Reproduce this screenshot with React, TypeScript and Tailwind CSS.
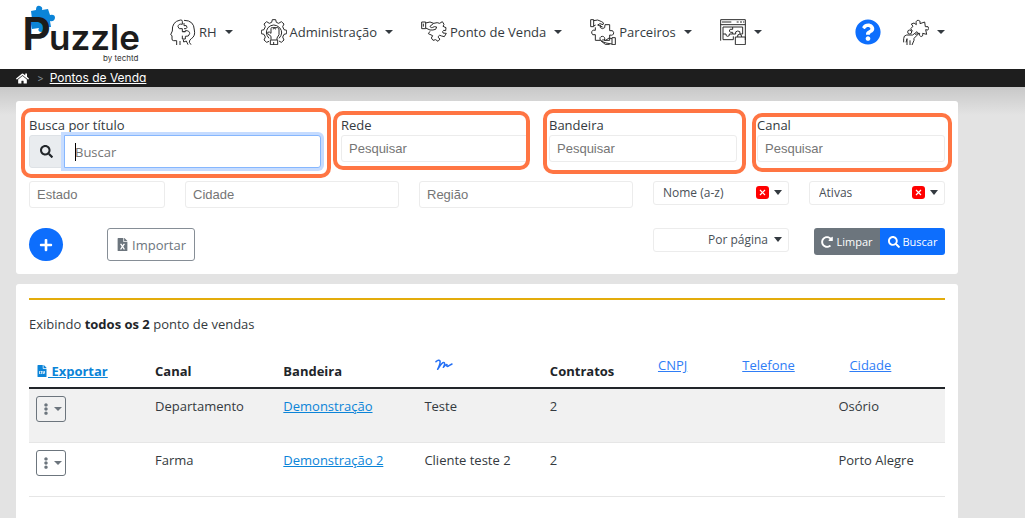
import React from "react";
import {
  FaEllipsisV,
  FaFileCsv,
  FaFileExcel,
  FaHome,
  FaPlus,
  FaQuestionCircle,
  FaRedoAlt,
  FaSearch,
} from "react-icons/fa";

type IconProps = { children: React.ReactNode };

const LineIcon: React.FC<IconProps> = ({ children }) => (
  <svg
    viewBox="0 0 78 78"
    className="h-[26px] w-[26px] shrink-0"
    fill="none"
    stroke="#2b2b2b"
    strokeWidth="3"
    strokeLinejoin="round"
    aria-hidden="true"
  >
    {children}
  </svg>
);

const HeadsIcon = () => (
  <LineIcon>
    <path d="M20 78V65H11Q6 65 6 60V50L2 47L7 36Q5 8 31 3Q37 2 37 7V16Q25 13 24 23Q25 32 37 29V38H46" />
    <path d="M42 4Q72 4 73 33Q77 51 64 59Q58 62 58 70L63 77M54 77L49 66L41 69L40 62" />
    <path d="M42 12V20Q51 17 51 25Q50 31 42 29M37 38H46V35Q59 34 59 44Q57 54 46 52V60H37V50M30 78V66" />
  </LineIcon>
);

const GearIcon = () => (
  <LineIcon>
    <path d="M24 67L17 70L9 63L13 54L9 46L1 44V34L9 32L13 23L9 15L17 8L25 13L32 10L34 2H44L46 10L53 13L61 8L69 15L65 23L69 32L77 34V44L69 46L65 54L69 63L61 70L54 66" />
    <path d="M24 58Q10 42 21 26Q38 10 56 26Q69 42 54 58" />
    <path d="M30 62V52L20 44Q18 38 25 39L30 43V29Q31 24 35 26H50Q55 27 54 33V47L48 57V63M28 63H50V77H28ZM38 69V77M37 31Q38 22 45 31" />
  </LineIcon>
);

const HandshakeIcon = () => (
  <LineIcon>
    <path d="M2 9H14V29H2ZM14 12L27 9L38 13Q50 9 56 13L64 8L69 16L66 22L75 26L74 35L68 34Q63 37 66 42L76 43L70 53L62 51Q55 46 52 52Q50 57 57 60L51 67L44 62L36 64L31 57L35 50L22 44L27 37" />
    <path d="M38 13L27 22Q29 29 40 23L47 24L44 31Q36 34 27 33L14 27M7 14V23" />
  </LineIcon>
);

const PartnersIcon = () => (
  <LineIcon>
    <path d="M2 2H11V23H2ZM11 5L23 3L35 8Q44 11 39 17L30 14L23 18L38 24M11 21L17 18" />
    <path d="M16 25V34Q5 31 5 42Q6 50 16 47V64H31Q27 53 37 52Q47 53 43 64H59V48Q71 51 71 41Q70 32 59 35V17H45Q47 29 37 29Q28 28 31 18" />
    <path d="M66 56H76V77H66ZM66 59L57 57L47 64Q34 60 35 67L48 72L66 75M31 64L47 77H59" />
  </LineIcon>
);

const WindowIcon = () => (
  <LineIcon>
    <path d="M2 65V2H76V63M2 17H76M6 9H34M50 9H56M60 9H66M69 9H73" />
    <path d="M9 24H68V45H60Q62 35 53 36Q44 37 47 45H38M9 24V62H40V52M38 24V31Q28 28 28 36Q30 42 38 40V45H28Q30 52 22 52Q17 51 18 45H9M46 54H76V77H46ZM53 54Q51 45 59 46Q66 47 65 54" />
  </LineIcon>
);

const ProfileIcon = () => (
  <LineIcon>
    <path d="M29 37L23 29L30 22L25 15L33 12L40 17Q37 3 46 4Q54 5 51 14L65 9L67 23Q78 20 77 29Q76 36 68 32L71 46L59 43Q61 54 53 52Q46 49 50 43L36 46" />
    <circle cx="20" cy="39" r="6" />
    <path d="M2 70V59Q2 49 11 48H29L42 38L47 44L33 58V64L27 78M12 78V59L9 70M21 78V64" />
  </LineIcon>
);

const Logo = () => (
  <svg viewBox="0 0 120 60" className="h-[60px] w-[120px] shrink-0" role="img" aria-label="Puzzle by techtd">
    <g transform="translate(-22 -4)">
      <path
        d="M31 10L36 9Q36 4 40 5Q43 6 42 9L48 8L50 14Q55 13 55 17Q54 21 50 20L51 26L45 26Q45 31 41 31Q37 30 39 27L32 28L31 23Q27 23 28 18Q30 17 32 18Z"
        fill="#0b84d8"
      />
      <text x="22" y="49" fontFamily="Inter, sans-serif" fontWeight="600" fontSize="45" fill="#1c1c1c">P</text>
      <text x="49" y="49" fontFamily="Inter, sans-serif" fontWeight="600" fontSize="35" fill="#1c1c1c">uzzle</text>
      <text x="103" y="60" fontFamily="Inter, sans-serif" fontSize="8" fill="#333">by techtd</text>
    </g>
  </svg>
);

const navItems = [
  { label: "RH", icon: <HeadsIcon /> },
  { label: "Administração", icon: <GearIcon /> },
  { label: "Ponto de Venda", icon: <HandshakeIcon /> },
  { label: "Parceiros", icon: <PartnersIcon /> },
  { label: "", icon: <WindowIcon /> },
];

const Caret = () => (
  <span className="h-0 w-0 border-x-4 border-t-4 border-x-transparent border-t-current" />
);

const inputClass =
  "block h-[27px] w-full rounded-[3px] border border-[#ececec] bg-white px-[7px] font-['Liberation_Sans',sans-serif] text-[13px] text-[#444] placeholder:text-[#757575] outline-none";

type FieldProps = { id: string; label: string; mark: string };

const SearchField: React.FC<FieldProps> = ({ id, label, mark }) => (
  <div className="relative col-span-2 self-start">
    <label htmlFor={id} className="block h-5 leading-5">{label}</label>
    <input id={id} placeholder="Pesquisar" className={inputClass} />
    <span className={`pointer-events-none absolute rounded-[10px] border-4 border-[#ff7543] ${mark}`} />
  </div>
);

type PickerProps = { label: string; value: string; clearable?: boolean };

const Picker: React.FC<PickerProps> = ({ label, value, clearable }) => (
  <div className="relative self-start">
    <select
      aria-label={label}
      className={`block h-6 w-full appearance-none rounded-[3px] border border-[#ececec] bg-white pl-[9px] pr-5 text-xs leading-5 text-[#495057] ${clearable ? "" : "text-right"}`}
    >
      <option>{value}</option>
    </select>
    {clearable && (
      <button
        aria-label={`Remover ${value}`}
        className="absolute right-5 top-[5px] flex h-[13px] w-[13px] items-center justify-center rounded-[3px] bg-[#f00] text-white"
      >
        <svg viewBox="0 0 7 7" className="h-[7px] w-[7px]" stroke="currentColor" strokeWidth="1.2">
          <path d="M1 1L6 6M6 1L1 6" />
        </svg>
      </button>
    )}
    <span className="pointer-events-none absolute right-[7px] top-[9px] border-x-4 border-t-[5px] border-x-transparent border-t-[#343a40]" />
  </div>
);

const rows = [
  { canal: "Departamento", bandeira: "Demonstração", titulo: "Teste", contratos: 2, cidade: "Osório" },
  { canal: "Farma", bandeira: "Demonstração 2", titulo: "Cliente teste 2", contratos: 2, cidade: "Porto Alegre" },
];

const sortLink = "font-normal text-[#2f7df6] underline";

const App: React.FC = () => {
  return (
    <div className="min-h-screen bg-[#e3e3e3] font-['Open_Sans',sans-serif] text-[13px] leading-5 text-[#343a40]">
      <header className="flex h-[69px] items-center bg-white pl-[22px] pr-20">
        <Logo />
        <nav className="ml-7 flex items-center gap-7 pb-[6px]">
          {navItems.map((item, i) => (
            <button key={i} aria-label={item.label || "Sistema"} className="flex items-center whitespace-nowrap">
              {item.icon}
              {item.label && <span className="ml-[3px]">{item.label}</span>}
              <span className="ml-2 flex"><Caret /></span>
            </button>
          ))}
        </nav>
        <div className="ml-auto flex items-center gap-[22px] pb-[6px]">
          <a href="#ajuda" aria-label="Ajuda" className="text-[#0d6efd]">
            <FaQuestionCircle size={26} />
          </a>
          <button aria-label="Perfil" className="flex items-center gap-2">
            <ProfileIcon />
            <Caret />
          </button>
        </div>
      </header>

      {/* Breadcrumb */}
      <div className="flex h-[18px] items-center bg-[#1e1e1e] pl-4 font-['Inter',sans-serif] text-xs leading-4 text-white">
        <a href="#inicio" aria-label="Início"><FaHome size={13} /></a>
        <span className="ml-2 text-[10px] text-[#868e96]">&gt;</span>
        <a href="#pontos" className="ml-[6px] underline [font-feature-settings:'cv11']">
          Pontos de Venda
        </a>
      </div>

      <main className="bg-linear-to-b from-[#c8c8c8] to-[#e3e3e3] bg-[length:100%_28px] bg-no-repeat pl-4 pr-[67px] pt-[14px]">
        {/* Filters */}
        <section className="rounded-[3px] bg-white px-[13px] pb-[13px] pt-[14px]">
          <div className="grid grid-cols-9 gap-x-5">
            <div className="relative col-span-3">
              <label htmlFor="titulo" className="block h-5 leading-5">Busca por título</label>
              <div className="flex h-[33px]">
                <span className="flex w-[35px] items-center justify-center rounded-l-[3px] border border-[#dee2e6] bg-[#e9ecef] text-[#212529]">
                  <FaSearch size={13} />
                </span>
                <div className="relative flex-1">
                  <input
                    id="titulo"
                    placeholder="Buscar"
                    className="h-full w-full rounded-r-[3px] border border-[#86b7fe] bg-white px-[10px] text-[#495057] shadow-[0_0_0_3px_#c6dcff] outline-none placeholder:text-[#757575]"
                  />
                  <span className="absolute left-[11px] top-2 h-[18px] w-px bg-black" />
                </div>
              </div>
              <span className="pointer-events-none absolute -bottom-[10px] -left-2 -right-[10px] -top-[7px] rounded-[10px] border-4 border-[#ff7543]" />
            </div>
            <SearchField id="rede" label="Rede" mark="-left-2 -right-px -top-1 -bottom-2" />
            <SearchField id="bandeira" label="Bandeira" mark="-left-1.5 -right-[9px] -top-1.5 -bottom-3" />
            <SearchField id="canal" label="Canal" mark="-left-[5px] -right-[7px] -top-0.5 -bottom-[10px]" />
          </div>

          <div className="mt-[13px] grid grid-cols-12 gap-x-5">
            <div className="col-span-2"><input aria-label="Estado" placeholder="Estado" className={inputClass} /></div>
            <div className="col-span-3"><input aria-label="Cidade" placeholder="Cidade" className={inputClass} /></div>
            <div className="col-span-3"><input aria-label="Região" placeholder="Região" className={inputClass} /></div>
            <div className="col-span-2"><Picker label="Ordenar" value="Nome (a-z)" clearable /></div>
            <div className="col-span-2"><Picker label="Situação" value="Ativas" clearable /></div>
          </div>

          <div className="mt-5 grid grid-cols-12 gap-x-5">
            <button aria-label="Adicionar" className="flex h-[33px] w-[34px] items-center justify-center rounded-full bg-[#0d6efd] text-white">
              <FaPlus size={14} />
            </button>
            <button className="col-span-7 flex h-[33px] w-[88px] items-center justify-center gap-[3px] justify-self-start rounded-[3px] border border-[#868e96] text-[#6c757d]">
              <FaFileExcel size={13} /> Importar
            </button>
            <div className="col-span-2"><Picker label="Resultados" value="Por página" /></div>
            <div className="col-span-2 flex h-[27px] justify-end text-[11px] text-white">
              <button className="flex w-[66px] items-center justify-center gap-[3px] rounded-l-[3px] bg-[#6c757d]">
                <FaRedoAlt size={12} /> Limpar
              </button>
              <button className="flex w-[65px] items-center justify-center gap-[3px] rounded-r-[3px] bg-[#0d6efd]">
                <FaSearch size={12} /> Buscar
              </button>
            </div>
          </div>
        </section>

        {/* Results */}
        <section className="mt-[10px] min-h-[240px] rounded-t-[3px] bg-white px-[13px] pt-[14px]">
          <hr className="border-0 border-t-2 border-[#e3ac0c]" />
          <p className="mt-[14px]">
            Exibindo <strong className="text-[#212529]">todos os 2</strong> ponto de vendas
          </p>
          <table className="mt-[13px] w-full table-fixed border-collapse text-left">
            <colgroup>
              <col className="w-[13%]" />
              <col className="w-[14%]" />
              <col className="w-[15.4%]" />
              <col className="w-[13.7%]" />
              <col className="w-[10.6%]" />
              <col className="w-[9.2%]" />
              <col />
              <col className="w-[12.4%]" />
            </colgroup>
            <thead>
              <tr className="h-[41px] border-b-2 border-[#212529] align-bottom text-[#212529] *:px-[7px] *:pb-[6px]">
                <th>
                  <a href="#exportar" className="text-[#0b84d8] underline">
                    <FaFileCsv size={12} className="mb-1 inline" /> Exportar
                  </a>
                </th>
                <th>Canal</th>
                <th>Bandeira</th>
                <th className="pl-[18px]! pt-2 align-top">
                  <a href="#titulo" aria-label="Título" className="block pt-1">
                    <svg viewBox="0 0 54 36" className="h-3 w-[18px]" fill="none" stroke="#2470f5" strokeWidth="4.5" strokeLinecap="round" strokeLinejoin="round">
                      <path d="M3 8Q12 1 15 6Q17 12 8 31Q22 7 28 11Q31 14 25 25Q33 15 36 17Q34 26 42 20L51 15" />
                    </svg>
                  </a>
                </th>
                <th>Contratos</th>
                <th className="pl-[18px]! pt-2 align-top"><a href="#cnpj" className={sortLink}>CNPJ</a></th>
                <th className="pl-[18px]! pt-2 align-top"><a href="#telefone" className={sortLink}>Telefone</a></th>
                <th className="pl-[18px]! pt-2 align-top"><a href="#cidade" className={sortLink}>Cidade</a></th>
              </tr>
            </thead>
            <tbody>
              {rows.map((row) => (
                <tr key={row.bandeira} className="h-[54px] border-b border-[#e6e6e6] align-top odd:bg-[#f1f1f1] *:px-[7px] *:pt-[7px]">
                  <td>
                    <button aria-label="Ações" className="flex h-[26px] w-[30px] items-center justify-center gap-0.5 rounded-[3px] border border-[#6c757d] text-[#6c757d]">
                      <FaEllipsisV size={12} />
                      <Caret />
                    </button>
                  </td>
                  <td>{row.canal}</td>
                  <td><a href="#bandeira" className="text-[#0b84d8] underline">{row.bandeira}</a></td>
                  <td>{row.titulo}</td>
                  <td>{row.contratos}</td>
                  <td />
                  <td />
                  <td>{row.cidade}</td>
                </tr>
              ))}
            </tbody>
          </table>
        </section>
      </main>
    </div>
  );
};

export default App;
